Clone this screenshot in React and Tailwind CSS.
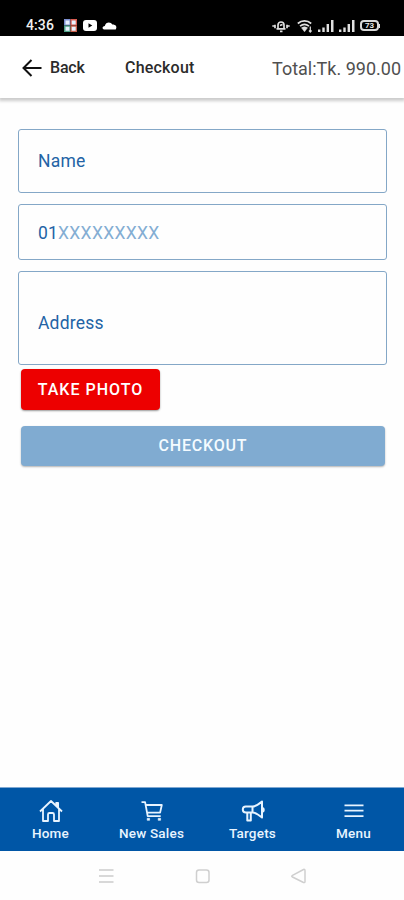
import React, { useState } from "react";

const tabs = [
  { label: "Home", Icon: HomeIcon },
  { label: "New Sales", Icon: CartIcon },
  { label: "Targets", Icon: MegaphoneIcon },
  { label: "Menu", Icon: MenuIcon },
];

function HomeIcon({ className }) {
  return (
    <svg viewBox="0 0 24 24" className={className} fill="none" stroke="currentColor" strokeWidth="1.8" strokeLinejoin="round">
      <path d="M1 12.500L12 2l11 10.500M4 10v12h5v-6.500q0-1.500 1.500-1.500h3q1.500 0 1.500 1.500V22h5V10" />
      <path d="M16.800 3.500h2.700V9l-2.700-2.500z" fill="currentColor" strokeWidth="1" />
    </svg>
  );
}

function CartIcon({ className }) {
  return (
    <svg viewBox="0 0 24 24" className={className} fill="none" stroke="currentColor" strokeWidth="1.8" strokeLinejoin="round">
      <path d="M1.500 3.200h3.600l2.600 14h13M5.600 6h16.200l-1.700 7.600H7" />
      <path d="M7.200 19.300h2.400v2H7.200zM18.200 19.300h2.400v2h-2.400z" fill="currentColor" strokeWidth=".6" />
    </svg>
  );
}

function MegaphoneIcon({ className }) {
  return (
    <svg viewBox="0 0 24 24" className={className} fill="none" stroke="currentColor" strokeWidth="2" strokeLinejoin="round">
      <path d="M11.500 7.500H4.800a3 3 0 0 0 0 6h6.700c3.500 0 6.500 2.500 9.500 5V2.500c-3 2.500-6 5-9.500 5zM11.500 7.500v6" />
      <path d="M6.300 13.500v8h3.500v-8M21.500 9c1.700.6 1.700 3.200 0 3.800" />
    </svg>
  );
}

function MenuIcon({ className }) {
  return (
    <svg viewBox="0 0 24 24" className={className} fill="none" stroke="currentColor" strokeWidth="1.700">
      <path d="M2.500 6.300h19M2.500 11.700h19M2.500 17.200h19" />
    </svg>
  );
}

// Four bars growing to the right
function Signal() {
  return (
    <svg viewBox="0 0 16 14" className="h-3.5 w-4" fill="#e0e0e0">
      <path d="M0 10.500h2.400v2.500H0zM4.300 8.500h2.400V13H4.300zM8.600 5H11v8H8.600zM13 1h2.500v12H13z" />
    </svg>
  );
}

function StatusBar() {
  return (
    <div className="flex h-9 items-end bg-black pb-[3px] pl-[26px] text-[#f0f0f0]">
      <span className="w-[37px] text-[14px] leading-[15px] font-medium tracking-[0.1px]">4:36</span>
      {/* notifications */}
      <svg viewBox="0 0 56 15" className="h-[15px] w-14">
        <path fill="#7d8fd0" d="M1 1h6.500v6.500H1z" />
        <path fill="#d95c50" d="M7.500 1H14v6.500H7.500z" />
        <path fill="#4fa287" d="M1 7.500h6.500V14H1z" />
        <path fill="#c9604c" d="M7.500 7.500H14V14H7.500z" />
        <path fill="#e9f2ff" d="M2.500 2.500h4v4h-4zM8.700 2.500h4v4h-4zM2.500 8.700h4v4h-4zM8.700 8.700h4v4h-4z" />
        <rect x="20" y="2" width="14" height="11" rx="3" fill="#fff" />
        <path d="M25.500 5.200v4.600l3.800-2.300z" fill="#000" />
        <path d="M42 11.500c-3.200 0-3.200-3.300-.2-3.600.8-4.200 6-4.600 7.600-1.400 3.500 0 5 2.300 3.300 5z" fill="#fff" />
      </svg>
      <div className="mr-[24px] ml-auto flex h-[15px] items-center">
        {/* bell with vibration dots */}
        <svg viewBox="0 0 18 14" className="mr-[7px] h-3.5 w-[18px]" fill="none" stroke="#e0e0e0" strokeWidth="1.700">
          <path d="M6 9.500V6a3 3 0 0 1 6 0v3.500M4.500 9.800h9M8 12.300h2.500M8 6.500l2.500-1" />
          <path d="M.3 7h2M15.700 7h2M3 5.800v3.400M15 5.800v3.400" />
        </svg>
        <svg viewBox="0 0 16 14" className="mr-[5px] h-3.5 w-4" fill="none" stroke="#e0e0e0" strokeWidth="1.700">
          <path d="M.8 4.500c4-3.400 9.400-3.400 13.400 0M3 7.200c2.800-2.200 6.200-2.200 9 0" />
          <path d="M4.500 8.800q3-2 6 0l-3 4z" fill="#e0e0e0" strokeWidth=".5" />
          <path d="M13.300 7.500v5.500M12 11.500l1.300 1.500 1.300-1.500" strokeWidth="1.200" />
        </svg>
        <Signal />
        <span className="w-[5px]" />
        <Signal />
        <span className="ml-[5px] flex h-[11px] w-[19px] items-center justify-center rounded-[4px] border-2 border-[#d8d8d8] text-[8px] leading-none font-bold text-[#e8e8e8]">
          73
        </span>
        <span className="h-1 w-px bg-[#e0e0e0]" />
      </div>
    </div>
  );
}

function Header() {
  return (
    <header className="flex h-[62px] items-center bg-white pl-[22px] shadow-[0_2px_3px_1px_rgba(0,0,0,0.2)]">
      <svg viewBox="0 0 20 18" className="mt-px h-[18px] w-5" fill="none" stroke="#111" strokeWidth="2">
        <path d="M19.500 9H1.500M9.500 1L1.500 9l8 8" />
      </svg>
      <span className="mt-px ml-2 w-[75px] text-[16px] font-medium tracking-[-0.2px] text-[#2b2b2b]">Back</span>
      <span className="mt-px text-[16px] font-medium tracking-[0.200px] text-[#2b2b2b]">Checkout</span>
      <span className="mt-[3px] mr-[3px] ml-auto text-[18px] text-[#505050]">Total:Tk. 990.00</span>
    </header>
  );
}

export default function App() {
  const [form, setForm] = useState({ name: "", phone: "01", address: "" });

  function update(e) {
    setForm({ ...form, [e.target.name]: e.target.value });
  }

  return (
    <div className="flex h-[900px] w-[404px] flex-col overflow-hidden bg-[#fefefe] font-[Roboto,sans-serif]">
      <StatusBar />
      <Header />

      <form
        onSubmit={(e) => e.preventDefault()}
        className="flex flex-1 flex-col pt-[31px] pr-[17px] pl-[18px] text-[17.5px] tracking-[0.2px] text-[#2363a5]"
      >
        <input
          name="name"
          value={form.name}
          onChange={update}
          placeholder="Name"
          className="h-16 rounded-[3px] border-[1.5px] border-[#84a7c7] px-[19px] placeholder:text-[#2363a5]"
        />

        {/* the X's show the digits that are still missing */}
        <label className="mt-[11px] flex h-14 items-center rounded-[3px] border-[1.5px] border-[#84a7c7] px-[19px] pt-[2px]">
          <span>{form.phone}</span>
          <span className="tracking-[0.3px] text-[#83add3]">{"X".repeat(11 - form.phone.length)}</span>
        </label>

        <input
          name="address"
          value={form.address}
          onChange={update}
          placeholder="Address"
          className="mt-[11px] h-[94px] rounded-[3px] border-[1.5px] border-[#84a7c7] px-[19px] pt-2.5 placeholder:text-[#2363a5]"
        />

        <button
          type="button"
          className="mt-1 ml-[3px] h-[41px] w-[139px] rounded-[4px] bg-[#ed0000] text-base font-medium tracking-[1px] text-white shadow-[0_1px_2px_rgba(0,0,0,0.4)]"
        >
          TAKE PHOTO
        </button>
        <button className="mt-4 mr-[2px] ml-[3px] h-10 rounded-[4px] bg-[#80abd1] text-base font-medium tracking-[0.8px] text-[#f4fbff] shadow-[0_1px_2px_rgba(0,0,0,0.3)]">
          CHECKOUT
        </button>
      </form>

      <nav className="grid h-16 grid-cols-4 border-t border-[#7fa8d2] bg-[#0056a6] text-[#e8f4ff]">
        {tabs.map(({ label, Icon }) => (
          <div key={label} className="flex flex-col items-center pt-[11px]">
            <Icon className="h-6 w-6" />
            <span className="mt-[2px] text-[13.5px] leading-4 font-medium tracking-[0.2px]">{label}</span>
          </div>
        ))}
      </nav>

      {/* android buttons */}
      <div className="flex h-[49px] items-center justify-center bg-[#fefefe]">
        <svg viewBox="0 0 208 16" className="h-4 w-52" fill="none" stroke="#cfcfcf" strokeWidth="1.500">
          <path d="M1 2h14.500M1 8h14.500M1 14h14.500" strokeWidth="1.800" stroke="#d8d8d8" />
          <rect x="98.500" y="2" width="12.500" height="12.500" rx="2.500" />
          <path d="M207 3v10.500q0 1.500-1.500 1l-11-5.500q-1.500-.8 0-1.600l11-5.900q1.500-.6 1.500 1.500z" />
        </svg>
      </div>
    </div>
  );
}
